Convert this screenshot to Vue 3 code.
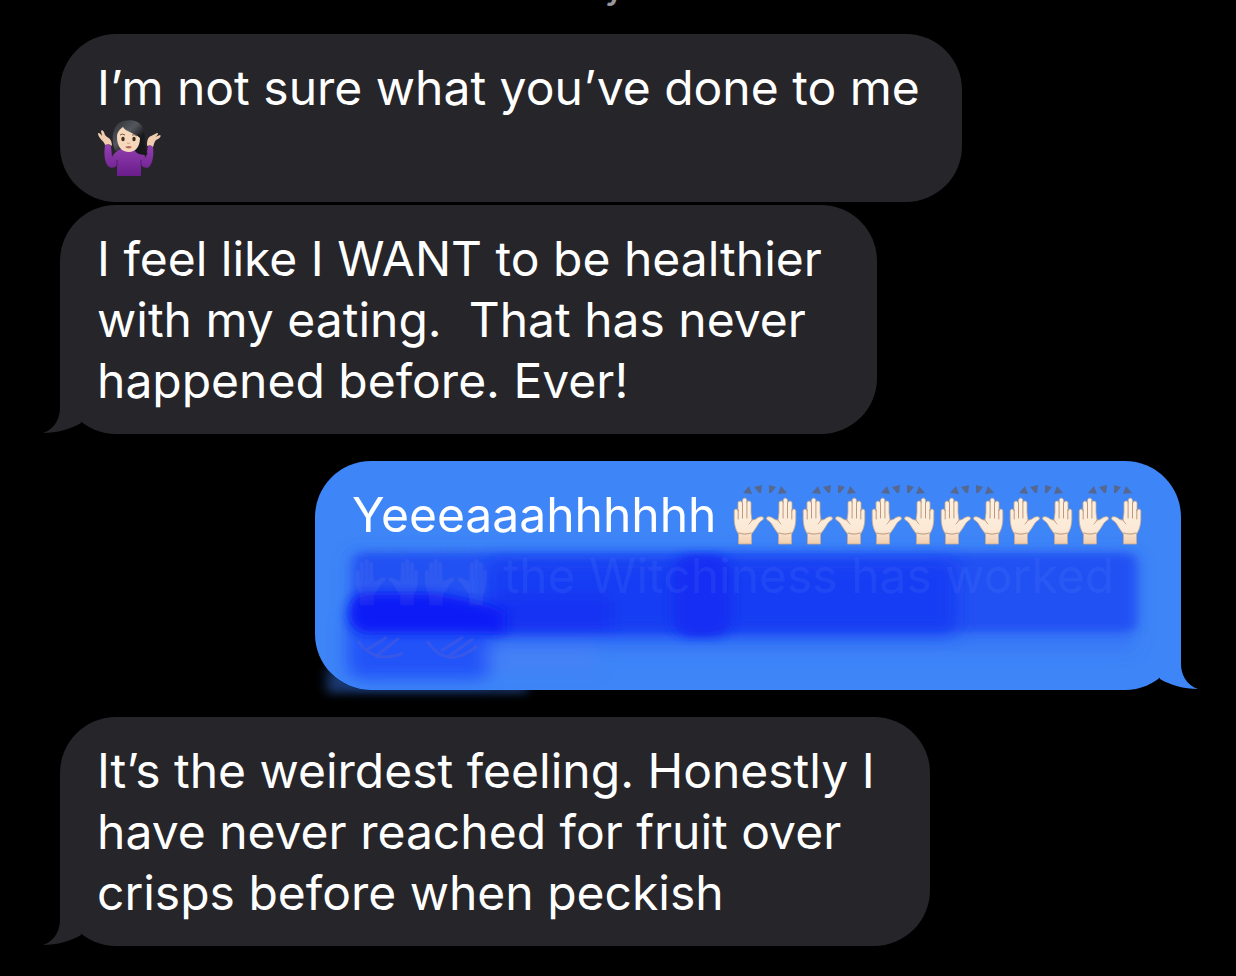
<script setup>
const messages = [
  {
    id: 1,
    from: "them",
    lines: [{ text: "I’m not sure what you’ve done to me" }, { shrug: true }],
  },
  {
    id: 2,
    from: "them",
    tail: true,
    lines: [
      { text: "I feel like I WANT to be healthier " },
      { text: "with my eating.  That has never " },
      { text: "happened before. Ever!" },
    ],
  },
  {
    id: 3,
    from: "me",
    tail: true,
    scribbled: true,
    lines: [
      { text: "Yeeeaaahhhhhh ", hands: 6 },
      { hidden: true, hands: 2, after: " the Witchiness has worked" },
      { text: " " },
    ],
  },
  {
    id: 4,
    from: "them",
    tail: true,
    lines: [
      { text: "It’s the weirdest feeling. Honestly I " },
      { text: "have never reached for fruit over " },
      { text: "crisps before when peckish" },
    ],
  },
];
</script>

<template>
  <main class="chat">
    <svg class="defs" aria-hidden="true">
      <defs>
        <linearGradient id="skin" x1="0" y1="0" x2="0" y2="1">
          <stop offset="0" stop-color="#fdf1e2" />
          <stop offset="0.7" stop-color="#fbe9d6" />
          <stop offset="1" stop-color="#efcdae" />
        </linearGradient>
        <g id="hand">
          <path
            fill="url(#skin)"
            stroke="#c9a88b"
            stroke-width="0.8"
            stroke-linejoin="round"
            d="M7.500 60V50C4.500 46 3.500 41 3.200 36V27C3.200 24.500 6.800 24.500 7 27V19C7 16.500 11 16.500 11.200 19L11.600 16C11.800 13.500 15.600 13.500 15.800 16V18.500C16 16.500 19.900 16.500 20 19V28C20 29 20.500 33 21 36C23 36.500 25 35 27 33.500C30 32 32.500 32.500 32.500 34.500C32.500 36 30 36.500 28 39C25.500 43 23 47 20.500 50V60Z"
          />
          <path
            fill="none"
            stroke="#b98f70"
            stroke-width="0.9"
            stroke-linecap="round"
            d="M7.200 26V35M11.500 19V34M15.900 18V34M21 36C20 38 19 39 18 40M8 49C12 50.500 16 50.500 20 49"
          />
        </g>
        <symbol id="raised-hands" viewBox="0 0 69 62">
          <g transform="translate(1 0)">
            <use href="#hand" />
            <use href="#hand" transform="matrix(-1 0 0 1 68 0)" />
            <path
              fill="#56688f"
              d="M12 9L18 2L21 10ZM23 3L31 1L30 9L28 9ZM38 1L45 3L40 9L38 9ZM47 10L50 2L56 9Z"
            />
          </g>
        </symbol>
      </defs>
    </svg>

    <p class="day">Today</p>

    <article v-for="m in messages" :key="m.id" class="bubble" :class="[m.from, { tailed: m.tail }]">
      <svg v-if="m.tail" class="tail" viewBox="0 0 40 62" aria-hidden="true">
        <path d="M17 0V36C17 46 12 57 0 61C14 61 28 57 38 51V0Z" />
      </svg>

      <svg v-if="m.scribbled" class="scribble" viewBox="0 0 866 240" aria-hidden="true">
        <defs>
          <filter id="soft" x="-20%" y="-40%" width="140%" height="180%">
            <feGaussianBlur stdDeviation="6 5" />
          </filter>
          <filter id="softer" x="-20%" y="-80%" width="140%" height="260%">
            <feGaussianBlur stdDeviation="9 8" />
          </filter>
          <clipPath id="spill-clip">
            <path d="M-20 170H0A56 56 0 0 0 56 229H400V250H-20Z" />
          </clipPath>
        </defs>
        <g clip-path="url(#spill-clip)">
          <path d="M12 205V232H212V222H60Z" fill="#28519c" opacity="0.7" filter="url(#soft)" />
        </g>
        <g filter="url(#softer)">
          <rect x="35" y="92" width="785" height="98" rx="10" fill="#3068f7" opacity="0.5" />
          <rect x="32" y="150" width="146" height="68" rx="14" fill="#2052f8" />
          <rect x="170" y="180" width="110" height="30" fill="#4a80f5" opacity="0.6" />
        </g>
        <g filter="url(#soft)">
          <rect x="38" y="92" width="784" height="79" rx="10" fill="#2451f3" />
        </g>
        <g filter="url(#softer)">
          <rect x="172" y="100" width="470" height="73" rx="10" fill="#183df3" />
          <rect x="172" y="136" width="125" height="35" fill="#1732f3" />
        </g>
        <g filter="url(#soft)">
          <rect x="358" y="94" width="58" height="82" rx="18" fill="#142df3" />
          <path d="M50 132H120Q160 138 190 150V172H50Q34 168 34 152Q34 134 50 132Z" fill="#071af6" />
        </g>
        <g class="traces">
          <path d="M43 180Q60 204 88 192M50 190L72 176M60 196L84 177" />
          <path d="M112 180Q132 210 162 185M126 190L148 176M134 195L158 178" />
        </g>
      </svg>

      <p v-for="(line, i) in m.lines" :key="i" class="line" :class="{ hidden: line.hidden }">
        <span>{{ line.text }}</span>
        <svg v-for="n in line.hands || 0" :key="n" class="hands" role="img" aria-label="Raised hands">
          <use href="#raised-hands" />
        </svg>
        <span>{{ line.after }}</span>
        <svg v-if="line.shrug" class="shrug" viewBox="0 0 64 58" role="img" aria-label="Woman shrugging">
          <defs>
            <linearGradient id="sweater" x1="0" y1="0" x2="0" y2="1">
              <stop offset="0" stop-color="#9440b0" />
              <stop offset="1" stop-color="#6a1d8c" />
            </linearGradient>
            <linearGradient id="hair" x1="0" y1="0" x2="1" y2="1">
              <stop offset="0" stop-color="#2c2f34" />
              <stop offset="0.4" stop-color="#54585e" />
              <stop offset="0.65" stop-color="#191a1e" />
            </linearGradient>
          </defs>
          <path
            d="M18 30C14 21 15 8 22 3C29-1 40-1 45 6C49 13 47 22 50 31C46 35 40 35 35 33H22Z"
            fill="url(#hair)"
          />
          <path
            d="M8 25C10 24 13 24 14 26L15 37C17 33 20 31 24 29H39C44 31 47 34 49 38L51 26C52 24 55 25 56 27C57 34 56 43 52 47C49 49 46 47 44 45V56H20V45C18 48 14 49 11 46C7 41 7 33 8 25Z"
            fill="url(#sweater)"
          />
          <path d="M20 46V40M44 46V40" fill="none" stroke="#551a72" stroke-width="1" />
          <path
            d="M8 25C7 21 2 19 1 14C1 12 3 13 5 16L4 11C5 9 7 11 8 15L10 17C13 18 15 21 15 26C13 24 10 24 8 25Z"
            fill="#efcdae"
          />
          <path
            d="M50 26C50 20 51 17 54 16L60 13C62 13 61 15 58 17L63 15C65 16 62 19 59 20C57 22 57 25 56 27C54 25 52 25 50 26Z"
            fill="#efcdae"
          />
          <path d="M41 14C48 18 43 27 51 34C46 36 40 34 38 31Z" fill="#17181b" />
          <path
            d="M20 17C20 12 23 9 26 7C29 12 38 13 43 18C43 27 38 32 32 32C25 32 20 27 20 17Z"
            fill="#f6d9bc"
          />
          <ellipse cx="26" cy="19" rx="1.700" ry="2.200" fill="#40291e" />
          <ellipse cx="37" cy="19" rx="1.700" ry="2.200" fill="#40291e" />
          <path
            d="M23 15Q25 13 28 15M35 15Q38 14 40 16"
            fill="none"
            stroke="#6a4938"
            stroke-width="0.9"
          />
          <path d="M30 23Q31 24 33 23" fill="none" stroke="#d0a17c" stroke-width="1" />
          <path d="M28 27Q32 25 35 27Q32 30 28 27Z" fill="#b96a58" />
        </svg>
      </p>
    </article>
  </main>
</template>

<style>
body {
  background: #000;
}
</style>

<style scoped>
.chat {
  display: flex;
  flex-direction: column;
  align-items: flex-start;
  min-height: 100vh;
  padding: 0 55px 30px 60px;
  box-sizing: border-box;
  overflow: hidden;
  background: #000;
  color: #fff;
  font-family: Inter, "Liberation Sans", sans-serif;
  font-size: 48px;
  line-height: 61px;
}

.defs {
  position: absolute;
  width: 0;
  height: 0;
}

.day {
  align-self: center;
  margin: -30px 0 29px;
  padding-right: 88px;
  color: #98989f;
  font-size: 32px;
  font-weight: 600;
  line-height: 35px;
}

.bubble {
  position: relative;
  box-sizing: border-box;
  max-width: 100%;
  margin-bottom: 3px;
  padding: 23px 42px 23px 37px;
  border-radius: 56px;
  background: #26252a;
}

.bubble.tailed {
  margin-bottom: 27px;
}

.bubble.me {
  align-self: flex-end;
  padding-right: 37px;
  background: #3e85f7;
}

.tail {
  position: absolute;
  bottom: 0;
  left: -17px;
  width: 40px;
  height: 62px;
  fill: #26252a;
}

.me .tail {
  right: -17px;
  left: auto;
  fill: #3e85f7;
  transform: scaleX(-1);
}

.line {
  position: relative;
  display: flex;
  align-items: center;
  height: 61px;
  margin: 0;
  white-space: pre;
}

.line.hidden {
  color: #5c86ff;
  opacity: 0.14;
}

.line.hidden .hands {
  opacity: 0.4;
}

.hands {
  flex: none;
  width: 69px;
  height: 62px;
}

.shrug {
  width: 64px;
  height: 58px;
}

.scribble {
  position: absolute;
  top: 0;
  left: 0;
  width: 866px;
  height: 240px;
  overflow: visible;
}

.traces {
  fill: none;
  stroke: #6b62c8;
  stroke-width: 3;
  opacity: 0.3;
}
</style>
